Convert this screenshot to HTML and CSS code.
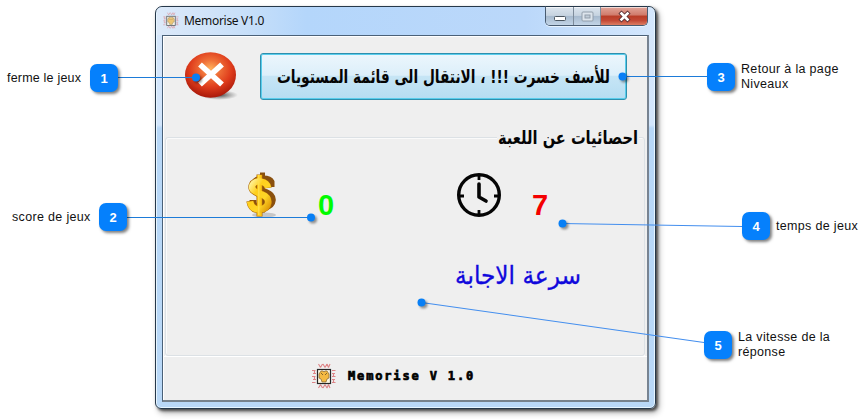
FILE: index.html
```html
<!DOCTYPE html>
<html lang="fr">
<head>
<meta charset="utf-8">
<title>Memorise V1.0</title>
<link rel="stylesheet" href="styles.css">
</head>
<body>
<svg class="defs" width="0" height="0" aria-hidden="true">
  <symbol id="chip" viewBox="0 0 24 26">
    <g fill="none" stroke="#dd8588" stroke-width="1.1">
      <path d="M6.500 1l2 3.500M10.500 1l-2 3.500M11 1l2 3.500M15 1l-2 3.500M15 1l1.500 3.500M18 1l-1.500 3.500M6.500 25l2-3.500M10.500 25l-2-3.500M11 25l2-3.500M15 25l-2-3.500M15 25l1.500-3.500M18 25l-1.500-3.500"/>
      <path d="M0 7.500h3.500M1 10.500h3M0 13.500h3.500M1 16.500h3M0 19.500h3.500M20 7.500h3.500M20 10.500h3M20 13.500h3.500M20 16.500h3M20 19.500h3.500M2.500 7v4M2.500 13v4M21.500 10v4M21.500 16v4"/>
    </g>
    <rect x="5.500" y="6.500" width="13" height="14" fill="#fff8e4" stroke="#252525" stroke-width="1.200"/>
    <path d="M9 8h2l1 1 1-1h2l2 3v4l-2 1-1 3h-4l-1-3-2-1v-4z" fill="#f4b942" stroke="#806030" stroke-width=".7"/>
    <path d="M9 10l2 2M15 10l-2 2" stroke="#6b5028" stroke-width=".8"/>
  </symbol>
</svg>
<main class="stage">
  <section class="window">
    <header class="titlebar">
      <svg class="app-icon"><use href="#chip"/></svg>
      <span class="title">Memorise V1.0</span>
      <div class="controls">
        <span class="ctl min"><svg width="14" height="7"><rect x="1.500" y="1.500" width="11" height="4" rx="1" fill="#fff" stroke="#4b5660"/></svg></span>
        <span class="ctl max"><svg width="13" height="11"><rect x="1" y="1" width="11" height="9" rx="1" fill="#dce4ec" stroke="#929eab"/><rect x="4" y="4" width="5" height="3" fill="#c0ccd8" stroke="#929eab"/></svg></span>
        <span class="ctl close"><svg width="13" height="11" viewBox="0 0 13 11"><path d="M3.500 2.500l6 6M9.500 2.500l-6 6" stroke="#5c3337" stroke-width="4.400" stroke-linecap="square"/><path d="M3.500 2.500l6 6M9.500 2.500l-6 6" stroke="#fff" stroke-width="2.600" stroke-linecap="square"/></svg></span>
      </div>
    </header>
    <div class="client">
      <div class="toolbar">
        <svg class="quit" width="54" height="50" viewBox="0 0 54 50">
          <defs>
            <radialGradient id="ball" cx=".5" cy=".36" r=".63"><stop offset="0" stop-color="#ffb15d"/><stop offset=".3" stop-color="#ef7038"/><stop offset=".65" stop-color="#df3c1c"/><stop offset="1" stop-color="#ab1a0b"/></radialGradient>
            <radialGradient id="shade"><stop offset="0" stop-color="#222" stop-opacity=".85"/><stop offset="1" stop-color="#555" stop-opacity="0"/></radialGradient>
          </defs>
          <ellipse cx="34" cy="43" rx="19" ry="5" fill="url(#shade)"/>
          <ellipse cx="25.500" cy="23" rx="25.500" ry="22.700" fill="url(#ball)"/>
          <path d="M15 12.500L37 32.500M37 12.500L15 32.500" stroke="#fff" stroke-width="5.600"/>
        </svg>
        <button class="retry" dir="rtl"><svg width="334" height="40"><text class="ar bold" x="333" y="26" textLength="333" lengthAdjust="spacingAndGlyphs">للأسف خسرت !!! ، الانتقال الى قائمة المستويات</text></svg></button>
      </div>
      <section class="group">
        <h2 class="legend" dir="rtl"><svg width="142" height="28"><text class="ar bold" x="141" y="20" textLength="140" lengthAdjust="spacingAndGlyphs">احصائيات عن اللعبة</text></svg></h2>
        <div class="stats">
          <div class="stat score">
            <svg width="36" height="50" viewBox="0 0 36 50">
              <defs><linearGradient id="gold" x1="0" y1="0" x2="1" y2="1"><stop offset="0" stop-color="#fff6a5"/><stop offset=".35" stop-color="#ffcf1c"/><stop offset=".7" stop-color="#ffd627"/><stop offset="1" stop-color="#e09a08"/></linearGradient></defs>
              <ellipse cx="20" cy="45" rx="12" ry="2.500" fill="#aaa" opacity=".6"/>
              <g fill="none" stroke="#8a500e" stroke-width="7">
                <path d="M27 17V12C25 8 14 8 11 12C8 17 14 20 22 22.500C31 26 30 35 21 37C15 38.500 11 37 9 34V30"/>
                <path d="M18.500 2.500v40" stroke-width="5"/>
              </g>
              <g fill="none" stroke="#b06d08" stroke-width="7.500">
                <path d="M15.500 4.500v42" stroke-width="6"/>
                <path d="M24 18C23 11 11 9 8.500 15C6.500 20 12 22.500 18 24.500C27 28 26 38 16 39.500C10 40 7 37 6 31"/>
              </g>
              <g fill="none" stroke-width="6.400">
                <path d="M15.500 5v41" stroke="#ffc814" stroke-width="4.600"/>
                <path stroke="url(#gold)" d="M24 17.700C23 11 11 9 8.500 15C6.500 20 12 22.500 18 24.500C27 28 26 38 16 39.500C10 40 7 37 6 31.500"/>
                <path d="M14.800 5v40" stroke="#ffe04e" stroke-width="1.300"/>
              </g>
            </svg>
            <span class="value green">0</span>
          </div>
          <div class="stat time">
            <svg width="46" height="46" viewBox="0 0 46 46" fill="none" stroke="#050505" stroke-width="3.400"><circle cx="23" cy="23" r="20.300"/><path d="M23 3v5M23 38v5M3 24h5M38 24h5" stroke-width="2.800"/><path d="M23 12v13l7 4" stroke-width="3.600" stroke-linecap="round" stroke-linejoin="round"/></svg>
            <span class="value red">7</span>
          </div>
        </div>
        <p class="speed" dir="rtl"><svg width="128" height="42"><text class="ar blue" x="127" y="27" textLength="126" lengthAdjust="spacingAndGlyphs">سرعة الاجابة</text></svg></p>
      </section>
      <footer class="status"><svg class="chip"><use href="#chip"/></svg><span>Memorise V 1.0</span></footer>
    </div>
  </section>

  <svg class="links" width="864" height="419">
    <g stroke="#1d7bd8" stroke-width="1.100"><path d="M116 77.500H196M126 217.500H311M622 76.500H708"/><path d="M562 223.500L742 226.500M421.500 302.500L704 342.500" stroke="#438eee"/></g>
    <g class="dots"><circle cx="196" cy="77.500" r="4"/><circle cx="311" cy="217.500" r="4"/><circle cx="622.500" cy="76.500" r="4"/><circle cx="562.500" cy="223.500" r="4"/><circle cx="421.500" cy="302.500" r="4"/></g>
  </svg>
  <div class="note n1"><span>ferme le jeux</span><b>1</b></div>
  <div class="note n2"><span>score de jeux</span><b>2</b></div>
  <div class="note n3"><b>3</b><span>Retour à la page<br>Niveaux</span></div>
  <div class="note n4"><b>4</b><span>temps de jeux</span></div>
  <div class="note n5"><b>5</b><span>La vitesse de la<br>réponse</span></div>
</main>
</body>
</html>
```
FILE: styles.css
```css
* { box-sizing: border-box; }
body { margin: 0; background: #fff; font-family: "Liberation Sans", sans-serif; color: #111; }
svg { display: block; overflow: visible; flex: none; }
.defs { position: absolute; }
.stage { position: relative; width: 864px; height: 419px; padding: 6px 0 0 155px; overflow: hidden; }

.window {
  width: 501px; height: 403px; padding: 0 6px;
  border: 1px solid #26384a; border-radius: 7px 7px 6px 6px;
  background: linear-gradient(#d5e6fa 0, #d3e6fc 118px, #b7d7f7 121px, #b9d8f7 100%);
  box-shadow: inset 0 0 0 1px #e6f5ff, 2px 2px 3px rgba(0,0,0,.62), 3px 4px 6px rgba(0,0,0,.3);
}
.titlebar { display: flex; align-items: flex-start; height: 28px; margin: 0 -5px; padding-left: 6px; background: linear-gradient(90deg, #dce9f9, #c7dff9 18%, #b4d6fb 30%, #bbd8fa 74%, #d4e7fd); border-radius: 6px 6px 0 0; }
.app-icon { width: 16px; height: 17px; margin-top: 5px; opacity: .72; }
.title { margin: 5px 0 0 5px; font: 12px/18px "Noto Sans", sans-serif; letter-spacing: -.3px; white-space: nowrap; }
.controls { display: flex; margin: -1px 6px 0 auto; width: 103px; height: 20px; border: 1px solid #485b70; border-top-color: #26384a; border-radius: 0 0 5px 5px; overflow: hidden; box-shadow: 0 1px #e8f4ff; }
.ctl { display: flex; align-items: center; justify-content: center; width: 28px; border-right: 1px solid #7e8c9b; background: linear-gradient(#dce5ee 0, #c6d3e0 47%, #a6b9cd 50%, #c2d4e6); box-shadow: inset 0 1px rgba(255,255,255,.6); }
.ctl.min { padding-top: 4px; }
.ctl.max { width: 27px; }
.ctl.close { flex: 1; border: 0; background: linear-gradient(#e2a69a 0, #d07a6b 45%, #b83c27 50%, #c34936 75%, #dc7d63); }

.client { width: 487px; height: 367px; display: flex; flex-direction: column; background: #efefef; border: 1px solid #4b6178; border-right-width: 2px; border-bottom-width: 2px; border-right-color: #778391; border-bottom-color: #77828c; box-shadow: inset 1px 1px #fff; }
.toolbar { display: flex; align-items: flex-start; height: 94px; padding: 16px 0 0 22px; }
.retry { display: flex; align-items: center; justify-content: center; width: 367px; height: 47px; margin: 1px 0 0 21px; padding: 0; border: 1px solid #2e8fae; border-radius: 3px; background: linear-gradient(#ecf6fc 0, #dceffa 47%, #c6e5f5 50%, #b5ddf2); box-shadow: inset 0 0 0 1px #59cdec; }
.ar { font-family: "DejaVu Sans", sans-serif; font-size: 18.500px; font-stretch: 75%; direction: rtl; text-anchor: start; }
.bold { font-weight: 700; fill: #050505; }
.blue { font-size: 25px; fill: #1008dc; stroke: #1008dc; stroke-width: .3px; }

.group { height: 219px; margin: 7px 2px 0 2px; border: 1px solid #dce1e5; border-radius: 3px; box-shadow: inset 1px 1px #fafafa, 0 1px #fff; }
.legend { width: 142px; height: 28px; margin: -14px 5px 0 auto; background: #efefef; }
.stats { display: flex; height: 86px; padding: 18px 0 0 78px; }
.stat { display: flex; align-items: flex-start; width: 212px; }
.time svg { margin-top: 2px; }
.time { width: 110px; }
.value { font-size: 29px; line-height: 32px; font-weight: 700; }
.score .value { margin: 19px 0 0 38px; }
.time .value { margin: 19px 0 0 30px; }
.green { color: #00fb00; }
.red { color: #f40000; }
.speed { direction: ltr; display: flex; margin: 19px 0 0; padding-left: 288px; }
.status { flex: 1; display: flex; align-items: center; padding: 0 0 5px 149px; font: 700 12px/16px "DejaVu Sans Mono", "Liberation Mono", monospace; color: #000; letter-spacing: 1.850px; -webkit-text-stroke: .7px #000; white-space: pre; border-top: 1px solid #fff; }
.chip { width: 24px; height: 26px; margin-right: 12px; }

.links { position: absolute; left: 0; top: 0; }
.dots { fill: #087ff5; filter: drop-shadow(2px 2px 1px rgba(0,0,0,.4)); }
.note { position: absolute; display: flex; align-items: center; gap: 6px; font-size: 12.500px; line-height: 15px; letter-spacing: .33px; white-space: nowrap; }
.note b { display: flex; align-items: center; justify-content: center; flex: none; width: 28px; height: 28px; border-radius: 7px; background: #0580fc; color: #fff; font-size: 13px; letter-spacing: 0; box-shadow: 2px 2px 3px rgba(0,0,0,.5); }
.n1, .n2 { justify-content: space-between; }
.n1 { left: 7px; top: 64px; width: 111px; letter-spacing: .2px; }
.n2 { left: 12px; top: 203px; width: 115px; }
.n3 { left: 707px; top: 62px; }
.n4 { left: 742px; top: 212px; }
.n5 { left: 704px; top: 330px; }
```
